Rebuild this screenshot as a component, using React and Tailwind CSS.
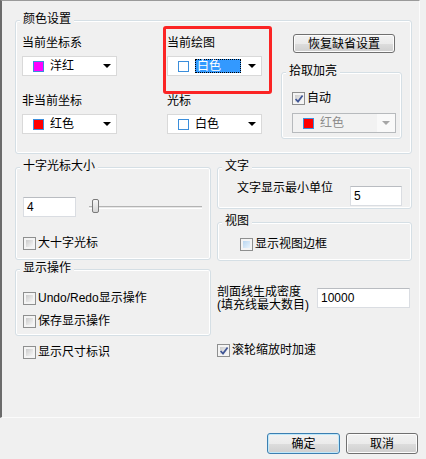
import React from "react";

// Win7 style "显示" options page, drawn with plain flex boxes
const FONT = "font-['Liberation_Sans','Noto_Sans_CJK_SC',sans-serif]";

const Group = ({ label, className = "", children }) => (
  <div
    className={`relative border border-[#d5dfe5] rounded-[3px] shadow-[inset_0_0_0_1px_#ffffff] ${className}`}
  >
    <span className="absolute left-[4px] top-[-10px] px-[3px] bg-[#f0f0f0] leading-[16px] whitespace-nowrap">
      {label}
    </span>
    {children}
  </div>
);

const Arrow = ({ disabled }) => (
  <span
    className={`w-0 h-0 border-x-[4px] border-x-transparent border-t-[4px] ${
      disabled ? "border-t-[#a6a6a6]" : "border-t-black"
    }`}
  />
);

const Combo = ({ swatch, text, selected = false, disabled = false, className = "" }) => (
  <div
    className={`flex items-center h-[20px] border ${
      disabled
        ? "border-[#b7babd] bg-[#f2f2f2] text-[#8c8c8c]"
        : "border-[#d9d9d9] bg-white"
    } ${className}`}
  >
    <span className={`ml-[10px] w-[11px] h-[11px] shrink-0 border border-[#3b8edb] ${swatch}`} />
    {selected ? (
      <span className="ml-[6px] w-[46px] h-[14px] flex items-center pl-[1px] bg-[#3399ff] text-white border border-dotted border-black">
        {text}
      </span>
    ) : (
      <span className="ml-[6px]">{text}</span>
    )}
    <span
      className={`ml-auto w-[18px] h-full flex items-center justify-center ${
        disabled ? "bg-[#f9f9f9]" : ""
      }`}
    >
      <Arrow disabled={disabled} />
    </span>
  </div>
);

const CheckBox = ({ checked, hot }) => (
  <span className="relative w-[13px] h-[13px] shrink-0 border border-[#8e8f8f] bg-[#f4f4f4] p-[2px] flex">
    <span
      className={`flex-1 ${
        hot
          ? "bg-linear-to-br from-[#b9d6f0] to-[#eaf4fc]"
          : "bg-linear-to-br from-[#cbcbcb] to-[#f7f7f7]"
      }`}
    />
    {checked && (
      <svg
        className="absolute left-[1px] top-[1px]"
        width="10"
        height="10"
        viewBox="0 0 10 10"
      >
        <path d="M1.6 5 L4 7.6 L8.6 1.4" fill="none" stroke="#3f5595" strokeWidth="1.7" />
      </svg>
    )}
  </span>
);

const CheckRow = ({ checked, hot, className = "", children }) => (
  <div className={`flex items-center h-[16px] ${className}`}>
    <CheckBox checked={checked} hot={hot} />
    <span className="ml-[2px] whitespace-nowrap">{children}</span>
  </div>
);

const TextBox = ({ value, className = "" }) => (
  <div
    className={`h-[20px] bg-white border border-[#dadde2] border-t-[#b9bcc1] flex items-center pl-[3px] ${className}`}
  >
    {value}
  </div>
);

const Slider = ({ className = "" }) => (
  <div className={`relative w-[113px] h-[16px] flex items-center ${className}`}>
    <div className="w-full h-[3px] border-t border-t-[#b3b3b3] border-b border-b-white bg-[#e6e6e6]" />
    <div className="absolute left-[3px] top-0 w-[7px] h-[14px] rounded-[2px] border border-[#7a7a7a] bg-linear-to-b from-[#f7f7f7] to-[#d6d6d6]" />
  </div>
);

const Button = ({ def, className = "", children }) => (
  <button
    type="button"
    className={`flex items-center justify-center rounded-[3px] border ${
      def
        ? "border-[#3c7fb1] shadow-[inset_0_0_0_1px_#bfe8fa]"
        : "border-[#707070] shadow-[inset_0_0_0_1px_#fcfcfc]"
    } bg-[linear-gradient(to_bottom,#f2f2f2_0%,#ebebeb_50%,#dddddd_50%,#cfcfcf_100%)] ${className}`}
  >
    {children}
  </button>
);

export default function App() {
  return (
    <div
      className={`relative w-[426px] h-[459px] bg-[#f0f0f0] text-black text-[12px] leading-[16px] ${FONT}`}
    >
      <div className="w-[420px] h-[418px] border-l-2 border-t border-r border-b border-l-[#6b6b6b] border-t-[#9a9a9a] border-r-[#fbfbfb] border-b-[#fbfbfb] pl-[13px] pt-[19px]">
        {/* 颜色设置 */}
        <Group label="颜色设置" className="w-[397px] h-[134px] flex items-start pl-[6px] pt-[14px]">
          <div className="w-[145px] flex flex-col">
            <div>当前坐标系</div>
            <Combo className="mt-[5px] w-[95px]" swatch="bg-[#ff00ff]" text="洋红" />
            <div className="mt-[17px]">非当前坐标</div>
            <Combo className="mt-[5px] w-[95px]" swatch="bg-[#ff0000]" text="红色" />
          </div>
          <div className="w-[114px] flex flex-col">
            <div>当前绘图</div>
            <Combo className="mt-[5px] w-[95px]" swatch="bg-white" text="白色" selected />
            <div className="mt-[17px]">光标</div>
            <Combo className="mt-[5px] w-[95px]" swatch="bg-white" text="白色" />
          </div>
          <div className="flex flex-col -mt-px">
            <Button className="ml-[12px] w-[102px] h-[19px]">恢复缺省设置</Button>
            <Group label="拾取加亮" className="mt-[19px] w-[121px] h-[67px] pl-[10px] pt-[17px]">
              <CheckRow checked>自动</CheckRow>
              <Combo className="mt-[7px] w-[104px]" swatch="bg-[#ff0000]" text="红色" disabled />
            </Group>
          </div>
        </Group>

        <div className="flex mt-[13px]">
          {/* left column */}
          <div className="w-[196px] flex flex-col">
            <Group label="十字光标大小" className="h-[93px] pl-[7px] pt-[29px]">
              <div className="flex items-center">
                <TextBox className="w-[53px]" value="4" />
                <Slider className="ml-[13px]" />
              </div>
              <CheckRow className="mt-[18px]">大十字光标</CheckRow>
            </Group>
            <Group label="显示操作" className="mt-[9px] h-[67px] pl-[7px] pt-[20px]">
              <CheckRow>Undo/Redo显示操作</CheckRow>
              <CheckRow className="mt-[7px]">保存显示操作</CheckRow>
            </Group>
            <CheckRow className="mt-[8px] ml-[8px]">显示尺寸标识</CheckRow>
          </div>

          {/* right column */}
          <div className="ml-[6px] w-[195px] flex flex-col">
            <Group label="文字" className="h-[42px] pl-[19px] pt-[12px] flex items-start">
              <span className="whitespace-nowrap">文字显示最小单位</span>
              <TextBox className="ml-[17px] mt-[6px] w-[52px] h-[19px]" value="5" />
            </Group>
            <Group label="视图" className="mt-[13px] h-[39px] pl-[22px] pt-[13px]">
              <CheckRow hot>显示视图边框</CheckRow>
            </Group>
            <div className="mt-[25px] flex items-start">
              <div className="w-[100px] leading-[13px] whitespace-nowrap">
                剖面线生成密度
                <br />
                (填充线最大数目)
              </div>
              <TextBox className="mt-[2px] w-[93px]" value="10000" />
            </div>
            <CheckRow checked className="mt-[30px]">
              滚轮缩放时加速
            </CheckRow>
          </div>
        </div>
      </div>

      <div className="flex justify-end gap-[6px] pr-[8px] mt-[15px]">
        <Button def className="w-[73px] h-[21px]">
          确定
        </Button>
        <Button className="w-[72px] h-[21px]">取消</Button>
      </div>

      {/* red annotation box around 当前绘图 */}
      <div className="absolute left-[163px] top-[26px] w-[109px] h-[68px] border-[3px] border-[#fb2424] rounded-[3px] pointer-events-none" />
    </div>
  );
}
